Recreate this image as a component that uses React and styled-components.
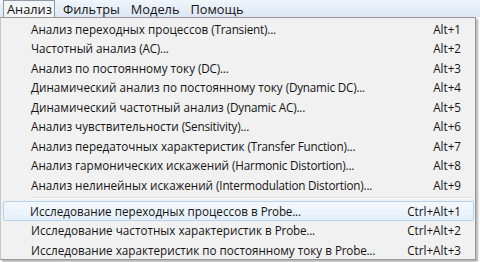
import styled, { createGlobalStyle } from 'styled-components'

const Global = createGlobalStyle`
  html, body {
    margin: 0;
    padding: 0;
    background: #ffffff;
  }
  body {
    width: 480px;
    height: 262px;
    overflow: hidden;
    font-family: "Open Sans", "Noto Sans", sans-serif;
    color: #141414;
  }
`;

const Frame = styled.div`
  width: 480px;
  height: 262px;
  display: flex;
  flex-direction: column;
  background: #ffffff;
`;

const MenuBar = styled.div`
  height: 17px;
  display: flex;
  align-items: stretch;
  gap: 4px;
  padding-left: 3px;
  background: linear-gradient(#f1f5fb, #dce6f4);
`;

const BarItem = styled.div`
  display: flex;
  align-items: center;
  padding: 0 2px 0 3px;
  font-size: 12.8px;
  line-height: 1;
  border: 1px solid ${p => (p.$open ? '#8f9aa8' : 'transparent')};
  border-bottom: none;
  background: ${p => (p.$open ? '#f3f4f6' : 'transparent')};
  white-space: nowrap;
`;

const Dropdown = styled.div`
  width: 476px;
  height: 243px;
  box-sizing: border-box;
  border: 1px solid #979797;
  border-left-color: #c8c8c8;
  background: #f1f1f1;
  padding: 1px 1px 0 1px;
  box-shadow: 2px 2px 2px rgba(0, 0, 0, 0.3);
  display: flex;
  flex-direction: column;
`;

const Item = styled.div`
  height: 19.5px;
  flex: none;
  display: flex;
  align-items: center;
  justify-content: space-between;
  box-sizing: border-box;
  padding: 0 12px 0 ${p => (p.$hover ? '26px' : '28px')};
  margin-left: ${p => (p.$hover ? '1px' : '0')};
  font-size: 11.7px;
  white-space: nowrap;
  border: 1px solid ${p => (p.$hover ? '#b4d4ee' : 'transparent')};
  border-radius: 2px;
  background: ${p => (p.$hover ? 'linear-gradient(#f3f8fd, #e6f0fa)' : 'transparent')};
`;

const Term = styled.span`
  letter-spacing: -0.2px;
`;

const Key = styled.span`
  text-align: right;
`;

const Separator = styled.div`
  height: 6.5px;
  flex: none;
  display: flex;
  align-items: center;
  padding-left: 29px;

  &::after {
    content: '';
    flex: 1;
    height: 1px;
    background: #e0e0e0;
    border-bottom: 1px solid #ffffff;
  }
`;

const analyses = [
  ['Анализ переходных процессов ', '(Transient)...', 'Alt+1'],
  ['Частотный анализ ', '(AC)...', 'Alt+2'],
  ['Анализ по постоянному току ', '(DC)...', 'Alt+3'],
  ['Динамический анализ по постоянному току ', '(Dynamic DC)...', 'Alt+4'],
  ['Динамический частотный анализ ', '(Dynamic AC)...', 'Alt+5'],
  ['Анализ чувствительности ', '(Sensitivity)...', 'Alt+6'],
  ['Анализ передаточных характеристик ', '(Transfer Function)...', 'Alt+7'],
  ['Анализ гармонических искажений ', '(Harmonic Distortion)...', 'Alt+8'],
  ['Анализ нелинейных искажений ', '(Intermodulation Distortion)...', 'Alt+9'],
];

const probes = [
  ['Исследование переходных процессов в ', 'Probe...', 'Ctrl+Alt+1'],
  ['Исследование частотных характеристик в ', 'Probe...', 'Ctrl+Alt+2'],
  ['Исследование характеристик по постоянному току в ', 'Probe...', 'Ctrl+Alt+3'],
];

function App() {
  return (
    <Frame>
      <Global />
      <MenuBar>
        <BarItem $open>Анализ</BarItem>
        <BarItem>Фильтры</BarItem>
        <BarItem>Модель</BarItem>
        <BarItem>Помощь</BarItem>
      </MenuBar>
      <Dropdown>
        {analyses.map(([label, term, key]) => (
          <Item key={key}>
            <span>{label}<Term>{term}</Term></span>
            <Key>{key}</Key>
          </Item>
        ))}
        <Separator />
        {probes.map(([label, term, key], i) => (
          <Item key={key} $hover={i === 0}>
            <span>{label}<Term>{term}</Term></span>
            <Key>{key}</Key>
          </Item>
        ))}
      </Dropdown>
    </Frame>
  )
}

export default App
